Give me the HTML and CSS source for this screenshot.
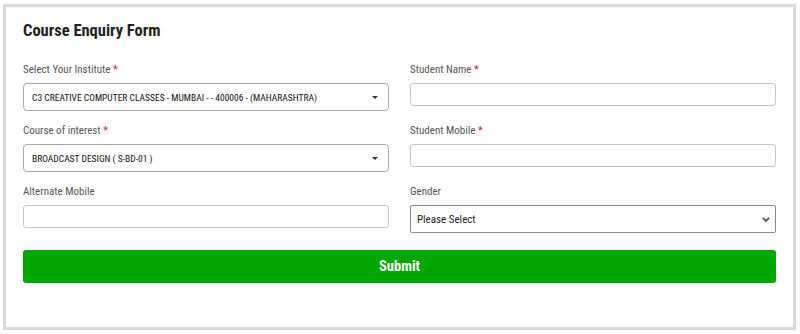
FILE: index.html
```html
<!DOCTYPE html>
<html lang="en">
<head>
  <meta charset="UTF-8">
  <meta name="viewport" content="width=device-width, initial-scale=1.0">
  <title>Course Enquiry Form</title>
  <link rel="stylesheet" href="styles.css">
</head>
<body>
  <div class="enquiry-box">
    <h2 class="form-title">Course Enquiry Form</h2>
    <form class="enquiry-form">
      <div class="field">
        <label>Select Your Institute <span class="req">*</span></label>
        <div class="fake-select">
          <span>C3 CREATIVE COMPUTER CLASSES - MUMBAI - - 400006 - (MAHARASHTRA)</span>
          <b class="caret"></b>
        </div>
      </div>
      <div class="field">
        <label>Student Name <span class="req">*</span></label>
        <input type="text" class="text-input">
      </div>
      <div class="field">
        <label>Course of interest <span class="req">*</span></label>
        <div class="fake-select">
          <span>BROADCAST DESIGN ( S-BD-01 )</span>
          <b class="caret"></b>
        </div>
      </div>
      <div class="field">
        <label>Student Mobile <span class="req">*</span></label>
        <input type="text" class="text-input">
      </div>
      <div class="field">
        <label>Alternate Mobile</label>
        <input type="text" class="text-input">
      </div>
      <div class="field">
        <label>Gender</label>
        <div class="gender-select">
          <span>Please Select</span>
          <svg width="10" height="7" viewBox="0 0 10 7"><path d="M1.8 1.8 L5 5 L8.2 1.8" fill="none" stroke="#555" stroke-width="1.8"/></svg>
        </div>
      </div>
      <button type="button" class="submit-btn">Submit</button>
    </form>
  </div>
</body>
</html>
```

FILE: styles.css
```css
body {
  margin: 0;
  background-color: #fff;
  font-family: "Roboto Condensed", "Liberation Sans Narrow", Roboto, sans-serif;
}
.enquiry-box {
  margin: 4px 4px 4px 3px;
  border: 3px solid #d9d9d9;
  padding: 14px 17px 44px 17px;
  background-color: #fff;
}
.form-title {
  margin: 0 0 21px 0;
  font-size: 16.5px;
  line-height: 20px;
  font-weight: bold;
  color: #222;
}
.enquiry-form {
  display: grid;
  grid-template-columns: 1fr 1fr;
  column-gap: 21px;
  row-gap: 12px;
  align-items: start;
}
.field label {
  display: block;
  font-size: 11px;
  line-height: 16px;
  color: #555;
  margin-bottom: 5px;
}
.req {
  color: #e0162b;
}
.fake-select {
  height: 28px;
  border: 1px solid #aaa;
  border-radius: 4px;
  box-sizing: border-box;
  display: flex;
  align-items: center;
  justify-content: space-between;
  padding: 0 10px 0 8px;
  font-size: 9.5px;
  color: #111;
}
.caret {
  width: 0;
  height: 0;
  border-style: solid;
  border-width: 3px 3px 0 3px;
  border-color: #333 transparent transparent transparent;
}
.text-input {
  display: block;
  width: 100%;
  height: 23px;
  box-sizing: border-box;
  border: 1px solid #c8c8c8;
  border-radius: 3px;
  margin: 0;
}
.gender-select {
  height: 28px;
  box-sizing: border-box;
  border: 1px solid #8a8a8a;
  border-radius: 2px;
  display: flex;
  align-items: center;
  justify-content: space-between;
  padding: 0 4px 0 6px;
  font-size: 11px;
  color: #222;
}
.submit-btn {
  grid-column: 1 / 3;
  margin-top: 5px;
  height: 33px;
  border: none;
  border-radius: 3px;
  background-color: #00a800;
  color: #fff;
  font-family: inherit;
  font-size: 14.5px;
  font-weight: bold;
}
```
